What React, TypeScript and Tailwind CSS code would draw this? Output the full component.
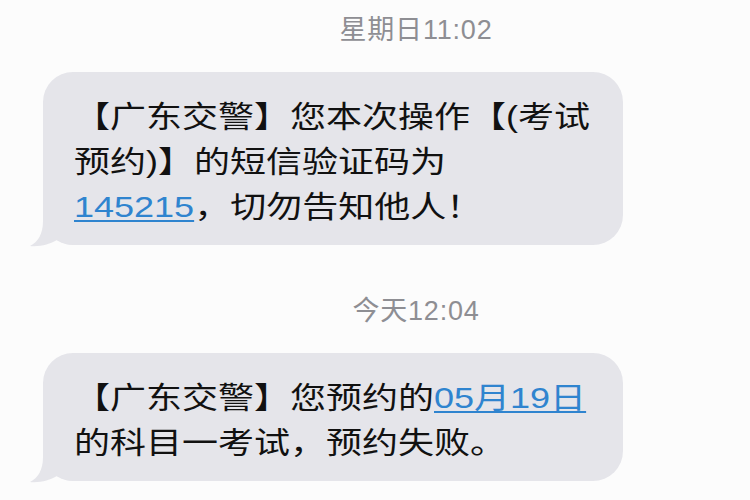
import type { ReactNode } from 'react'

const FONT = '"Liberation Sans", "Noto Sans CJK SC", sans-serif'

function Link({ children }: { children: ReactNode }) {
  return (
    <span className="text-[#2f84cf] underline decoration-[#2f84cf] decoration-2 underline-offset-[3px]">
      {children}
    </span>
  )
}

function Stamp({ children }: { children: ReactNode }) {
  return (
    <div className="flex justify-center pl-[82px] text-[27px] leading-[32px] tracking-[0.8px] text-[#8e8e93]">
      {children}
    </div>
  )
}

function Bubble({ lines }: { lines: ReactNode[] }) {
  return (
    <div className="relative ml-[43px] w-[580px] rounded-[30px] bg-[#e5e5ea] pt-[22px] pb-[16px] pl-[31px]">
      {/* tail */}
      <svg
        className="absolute -left-[14px] -bottom-[2px]"
        width="46"
        height="40"
        viewBox="0 0 46 40"
      >
        <path
          d="M14,0 L14,14 C14,27 9,35 1,39 C11,40 21,37 28,33 C34,36 40,38 46,38 L46,0 Z"
          fill="#e5e5ea"
        />
      </svg>
      <div className="relative origin-left scale-x-[1.2] whitespace-nowrap text-[30px] leading-[45px] text-[#111]">
        {lines.map((l, i) => (
          <div key={i}>{l}</div>
        ))}
      </div>
    </div>
  )
}

export default function App() {
  return (
    <div
      className="h-[500px] w-[750px] overflow-hidden bg-[#fcfcfc] pt-[14px]"
      style={{ fontFamily: FONT }}
    >
      <Stamp>星期日11:02</Stamp>
      <div className="mt-[26px]">
        <Bubble
          lines={[
            '【广东交警】您本次操作【(考试',
            '预约)】的短信验证码为',
            <>
              <Link>145215</Link>，切勿告知他人！
            </>,
          ]}
        />
      </div>
      <div className="mt-[50px]">
        <Stamp>今天12:04</Stamp>
      </div>
      <div className="mt-[26px]">
        <Bubble
          lines={[
            <>
              【广东交警】您预约的<Link>05月19日</Link>
            </>,
            '的科目一考试，预约失败。',
          ]}
        />
      </div>
    </div>
  )
}
